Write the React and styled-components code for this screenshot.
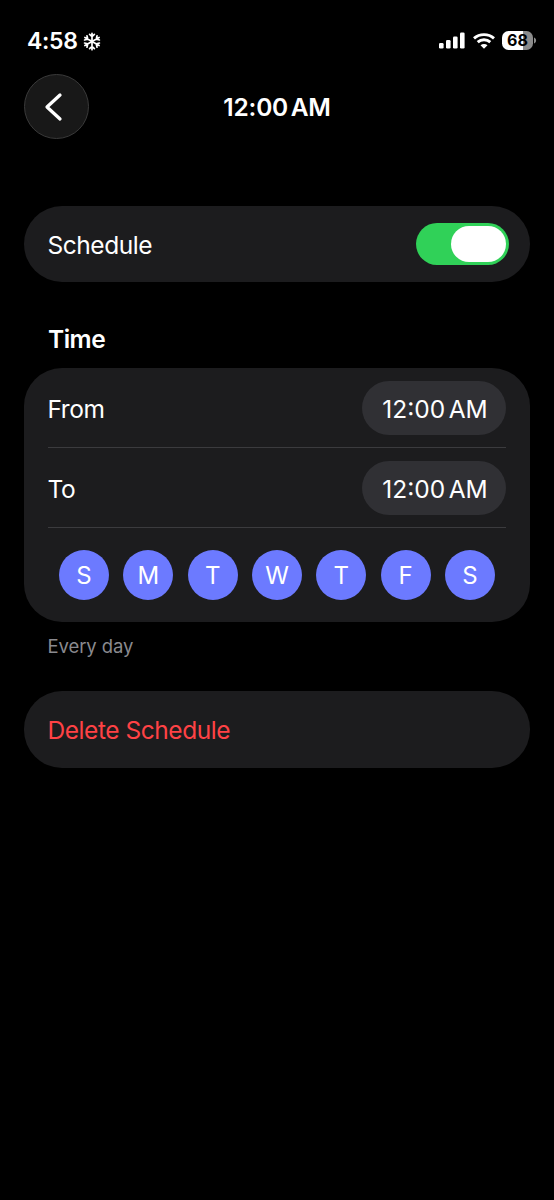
import React from "react";
import styled, { createGlobalStyle } from "styled-components";

const GlobalStyle = createGlobalStyle`
  html, body { margin: 0; background: #000; }
  * { box-sizing: border-box; }
  button { font: inherit; border: 0; padding: 0; }
`;

const Screen = styled.main`
  width: 554px;
  height: 1200px;
  padding: 0 24px;
  overflow: hidden;
  display: flex;
  flex-direction: column;
  background: #000;
  color: #fff;
  font-family: Inter, "Liberation Sans", sans-serif;
  font-size: 25px;
  line-height: 30px;
`;

const StatusBar = styled.div`
  height: 74px;
  padding: 26px 0 0 3px;
  margin-right: -7px;
  display: flex;
  justify-content: space-between;
  align-items: flex-start;
`;

const Clock = styled.div`
  display: flex;
  align-items: center;
  gap: 5px;
  font-size: 23px;
  font-weight: 560;
  letter-spacing: -0.3px;
`;

const Indicators = styled.div`
  height: 29px;
  display: flex;
  align-items: center;
`;

const Battery = styled.div`
  width: 31px;
  height: 19px;
  margin-left: 7px;
  border-radius: 6.5px;
  display: flex;
  align-items: center;
  justify-content: center;
  background: linear-gradient(90deg, #fff 68%, #8b8b8b 68%);
  color: #000;
  font-size: 16px;
  font-weight: 700;
  line-height: 19px;
`;

const Header = styled.header`
  height: 65px;
  display: grid;
  grid-template-columns: 65px 1fr 65px;
  align-items: center;
`;

const BackButton = styled.button`
  width: 65px;
  height: 65px;
  padding-right: 5px;
  border: 1px solid #3a3a3a;
  border-radius: 50%;
  background: #181818;
  display: flex;
  align-items: center;
  justify-content: center;
`;

const Title = styled.h1`
  margin: 0;
  padding-top: 1px;
  text-align: center;
  font-size: 24.5px;
  font-weight: 600;
  letter-spacing: -0.2px;
  word-spacing: -3.4px;
`;

const Card = styled.section`
  background: #1c1c1e;
  border-radius: 38px;
  padding: 0 24px;
  margin-top: ${(p) => p.$gap}px;
  height: ${(p) => p.$height}px;
  flex: none;
`;

const Row = styled.div`
  height: ${(p) => p.$height || 76}px;
  display: flex;
  align-items: center;
  justify-content: space-between;
  border-bottom: ${(p) => (p.$divided ? "1px solid #3b3b3e" : "0")};
`;

const Label = styled.span`
  padding-top: 2px;
  margin-left: -0.5px;
  font-size: 24.5px;
  letter-spacing: -0.45px;
  color: ${(p) => p.$color || "#fff"};
`;

const Toggle = styled.button`
  width: 93px;
  height: 42px;
  margin-right: -3px;
  padding: 3px;
  border-radius: 21px;
  background: #30d158;
  display: flex;
  justify-content: flex-end;
`;

const Knob = styled.span`
  width: 55px;
  height: 36px;
  border-radius: 18px;
  background: #fff;
`;

const SectionTitle = styled.h2`
  margin: 42px 0 0 24px;
  height: 44px;
  font-size: 24.5px;
  line-height: 30px;
  font-weight: 600;
  letter-spacing: -0.5px;
`;

const TimePill = styled.button`
  width: 144px;
  height: 54px;
  padding: 2px 0 0 2px;
  border-radius: 27px;
  background: #303034;
  color: #fff;
  font-size: 24.5px;
  letter-spacing: 0;
  word-spacing: -3.4px;
`;

const Days = styled.div`
  display: flex;
  justify-content: space-between;
  padding: 22px 11px 0 11px;
`;

const Day = styled.button`
  width: 50px;
  height: 50px;
  padding-top: 1px;
  border-radius: 50%;
  background: #6c7aff;
  color: #fff;
  font-size: 24px;
  line-height: 50px;
`;

const Note = styled.p`
  margin: 12px 0 0 23.5px;
  font-size: 18.5px;
  line-height: 24px;
  letter-spacing: -0.1px;
  color: #8a8a8f;
`;

const Snowflake = () => (
  <svg width="18" height="19" viewBox="-9 -9.5 18 19" fill="none" stroke="#fff" strokeWidth="1.7" strokeLinecap="round">
    {[0, 60, 120, 180, 240, 300].map((a) => (
      <path key={a} transform={`rotate(${a})`} d="M0 0V-8.2M-2.4-7.2L0-4.9L2.4-7.2" />
    ))}
  </svg>
);

const Signal = () => (
  <svg width="26" height="17" viewBox="0 0 26 17" fill="#fff">
    <rect x="0" y="11" width="4.6" height="5.5" rx="1.3" />
    <rect x="7" y="8" width="4.6" height="8.5" rx="1.3" />
    <rect x="14" y="4.4" width="4.6" height="12.1" rx="1.3" />
    <rect x="21" y="0.5" width="4.6" height="16" rx="1.3" />
  </svg>
);

const WifiGlyph = styled.svg`
  margin-left: 8px;
`;

const Wifi = () => (
  <WifiGlyph width="22" height="16" viewBox="0 0 22 16" fill="none" stroke="#fff" strokeWidth="2.9">
    <path d="M1 5.4C6.6 .3 15.4 .3 21 5.4" />
    <path d="M4.7 9.1C8.3 5.9 13.7 5.9 17.3 9.1" />
    <path d="M11 15.8L7.5 12.3C9.5 10.5 12.5 10.5 14.5 12.3Z" fill="#fff" stroke="none" />
  </WifiGlyph>
);

const BatteryTip = () => (
  <svg width="4" height="7" viewBox="0 0 4 7">
    <path d="M1 .5C3.8 1.6 3.8 5.4 1 6.5Z" fill="#8b8b8b" />
  </svg>
);

const DAYS = ["S", "M", "T", "W", "T", "F", "S"];

export default function App() {
  return (
    <Screen>
      <GlobalStyle />
      <StatusBar>
        <Clock>4:58<Snowflake /></Clock>
        <Indicators>
          <Signal />
          <Wifi />
          <Battery>68</Battery>
          <BatteryTip />
        </Indicators>
      </StatusBar>
      <Header>
        <BackButton aria-label="Back">
          <svg width="20" height="30" viewBox="0 0 20 30" fill="none" stroke="#fff" strokeWidth="3.3" strokeLinecap="round" strokeLinejoin="round">
            <path d="M16 3L3 15L16 27" />
          </svg>
        </BackButton>
        <Title>12:00 AM</Title>
      </Header>
      <Card $gap={67} $height={76}>
        <Row>
          <Label>Schedule</Label>
          <Toggle role="switch" aria-checked="true" aria-label="Schedule"><Knob /></Toggle>
        </Row>
      </Card>
      <SectionTitle>Time</SectionTitle>
      <Card $gap={0} $height={254}>
        <Row $height={80} $divided><Label>From</Label><TimePill>12:00 AM</TimePill></Row>
        <Row $height={80} $divided><Label>To</Label><TimePill>12:00 AM</TimePill></Row>
        <Days>{DAYS.map((d, i) => <Day key={i}>{d}</Day>)}</Days>
      </Card>
      <Note>Every day</Note>
      <Card $gap={33} $height={77}>
        <Row><Label $color="#ff4245">Delete Schedule</Label></Row>
      </Card>
    </Screen>
  );
}
